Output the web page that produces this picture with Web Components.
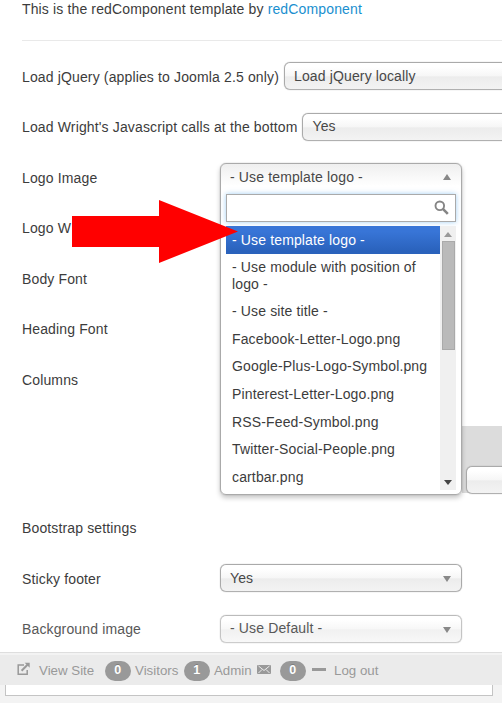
<!DOCTYPE html>
<html lang="en"><head><meta charset="utf-8"><title>Template settings</title>
<style>
html,body{margin:0;height:703px;overflow:hidden}
body{font:14px/17px "Liberation Sans",Arial,sans-serif;letter-spacing:.14px;color:#3c3c3c;background:#fff}
</style></head><body>
<settings-page></settings-page>
<script>
const define=(name,html,init)=>customElements.define(name,class extends HTMLElement{
  constructor(){super();this.attachShadow({mode:'open'}).innerHTML=html;}
  connectedCallback(){if(init)init(this,this.shadowRoot);}
});

define('select-box',`<style>
:host{display:block;box-sizing:border-box;width:242px;height:28px;flex:none;border:1px solid #aaa;border-bottom-color:#b0b0b0;border-radius:6px;box-shadow:0 0 1px rgba(0,0,0,.35);background:linear-gradient(#fff 15%,#f6f6f6 50%,#ececec 53%,#f3f3f3 100%);color:#484848}
:host([wide]){width:400px}
:host([faded]){border-color:#bbb #c4c4c4 #ccc;background:linear-gradient(#fff 15%,#f7f7f7 50%,#f1f1f1 53%,#f8f8f8);color:#585858}
div{display:flex;align-items:center;height:26px;padding:0 10px 0 9px}
i{width:0;height:0;border:4px solid transparent;border-top:6px solid #888;border-bottom:0;margin:2px 0 0 auto}
</style><div><slot></slot><i></i></div>`);

define('form-row',`<style>
:host{display:flex;height:50.5px;align-items:center;white-space:nowrap}
span{width:198px;flex:none;padding-top:2px}
:host([inline]) span{width:auto;margin-right:5px}
</style><span></span><slot></slot>`,(el,r)=>{r.querySelector('span').textContent=el.getAttribute('label');});

define('option-item',`<style>
:host{display:block;padding:5.5px 6px 5.55px;line-height:16.5px;color:#3c3c3c}
:host([selected]){background:linear-gradient(#3875d7 20%,#2a62bc 90%);color:#fff}
</style><slot></slot>`);

define('search-field',`<style>
:host{display:flex;box-sizing:border-box;height:28px;border:1px solid #aaa;background:#fff;box-shadow:0 0 5px rgba(82,168,236,.55);justify-content:flex-end;padding:5px 6px 0 0}
</style><svg width="15" height="15" viewBox="0 0 15 15" fill="none" stroke="#858585"><circle cx="5.8" cy="5.8" r="4.3" stroke-width="1.9"/><path d="M8.9 8.9L13.8 13.8" stroke-width="2.6"/></svg>`);

define('scroll-track',`<style>
:host{display:flex;flex-direction:column;align-items:center;width:16px;flex:none;background:#f0f0f0}
.up,.down{width:0;height:0;border:4px solid transparent}
.up{border-bottom:5px solid #999;border-top:0;margin:6px 0 4px}
.thumb{width:11px;height:107px;background:#bababa;border:1px solid #aaa;box-sizing:content-box}
.down{border-top:5px solid #444;border-bottom:0;margin:auto 0 5px}
</style><i class="up"></i><i class="thumb"></i><i class="down"></i>`);

define('open-select',`<style>
:host{display:block;position:relative;width:242px;height:28px;flex:none}
.box{position:absolute;z-index:2;top:0;left:0;box-sizing:border-box;width:242px;height:332px;border:1px solid #aaa;border-radius:6px;box-shadow:0 3px 5px rgba(0,0,0,.22),0 0 1px rgba(0,0,0,.35);background:linear-gradient(#efefef,#fff 22px);padding:0 5px 4px;display:flex;flex-direction:column;color:#3c3c3c}
header{display:flex;height:26px;align-items:center;justify-content:space-between;padding:0 5px 0 4px;color:#484848}
header i{width:0;height:0;border:4px solid transparent;border-bottom:6px solid #888;border-top:0}
search-field{margin:4px 0 4px 0}
.list{display:flex;height:264px}
.options{flex:1;white-space:normal}
</style><div class="box"><header><slot name="value"></slot><i></i></header><search-field></search-field>
<div class="list"><div class="options"><slot></slot></div><scroll-track></scroll-track></div></div>`);

define('red-arrow',`<style>:host{display:block;position:absolute;left:72px;top:200px;z-index:3;line-height:0}</style>
<svg width="166" height="63" viewBox="0 0 166 63"><path d="M0 16H87V0L166 31.5L87 63V47H0Z" fill="#f00"/></svg>`);

define('count-badge',`<style>:host{display:flex;align-items:center;justify-content:center;width:26.5px;height:20px;border-radius:10px;background:#999;color:#fff;font-weight:bold;font-size:12.5px;flex:none;text-shadow:0 -1px 0 rgba(0,0,0,.2)}</style><slot></slot>`);

define('status-bar',`<style>
:host{position:absolute;z-index:4;left:0;right:0;top:652px;height:33px;box-sizing:border-box;border-top:1px solid #dedede;background:#ebebeb;box-shadow:inset 0 2px 0 #f3f3f3;color:#999;display:flex;align-items:center;padding:3px 0 0 17px;font-size:13.3px;letter-spacing:0;white-space:nowrap}
svg{flex:none}
.view{margin:0 8.5px 0 8px;width:57px}
.vis{margin-left:4px;width:45px;margin-right:3.5px}
.adm{margin-left:4px;width:43px}
.dash{width:14px;height:3px;background:#999;margin:-3px 8.5px 0 5.5px}
</style>
<svg width="14" height="14" viewBox="0 0 14 14" fill="none" stroke="#999" stroke-width="1.5" style="margin-top:-3px"><path d="M7 3H1.2V12.2H10.2V8"/><path d="M4.6 8.7L10.5 2.8" stroke-width="2"/><path d="M7.7 .8H12.7V5.8L7.7 .8Z" fill="#999" stroke="none"/></svg>
<span class="view">View Site</span><count-badge>0</count-badge><span class="vis">Visitors</span><count-badge>1</count-badge><span class="adm">Admin</span>
<svg width="14" height="9" viewBox="0 0 14 9" style="margin:-2px 8.5px 0 0"><rect width="14" height="9" rx="1" fill="#999"/><path d="M1.5 1L7 5.5L12.5 1M1.5 8L5 4.5M12.5 8L9 4.5" fill="none" stroke="#ebebeb"/></svg>
<count-badge>0</count-badge><i class="dash"></i><span>Log out</span>`);

define('column-panel',`<style>
:host{display:block;height:122.2px;box-sizing:border-box;padding:21.5px 0 0 440px}
div{height:67px;width:200px;background:#dcdcdc;box-sizing:border-box;padding:40px 0 0 4px}
</style><div><select-box wide></select-box></div>`);

define('settings-page',`<style>
:host{display:block;position:relative;width:502px;height:703px;overflow:hidden;background:#f3f3f3}
main{height:685px;background:#fff;box-sizing:border-box;padding-left:22px;overflow:hidden}
.intro{height:41px;box-sizing:border-box;border-bottom:1px solid #e9e9e9;padding-top:1px;margin-bottom:10px}
a{color:#1a8fcf;text-decoration:none}
.end{margin-left:5px;width:488px;height:11px;box-sizing:border-box;background:#fff;border:1px solid #c4c4c4;border-top:0}
form-row[faded]{color:#585858}
</style><main>
<div class="intro">This is the redComponent template by <a>redComponent</a></div>
<form-row inline label="Load jQuery (applies to Joomla 2.5 only)"><select-box wide>Load jQuery locally</select-box></form-row>
<form-row inline label="Load Wright's Javascript calls at the bottom"><select-box wide>Yes</select-box></form-row>
<form-row label="Logo Image"><open-select><span slot="value">- Use template logo -</span>
<option-item selected>- Use template logo -</option-item><option-item>- Use module with position of logo -</option-item><option-item>- Use site title -</option-item><option-item>Facebook-Letter-Logo.png</option-item><option-item>Google-Plus-Logo-Symbol.png</option-item><option-item>Pinterest-Letter-Logo.png</option-item><option-item>RSS-Feed-Symbol.png</option-item><option-item>Twitter-Social-People.png</option-item><option-item>cartbar.png</option-item></open-select></form-row>
<form-row label="Logo W"></form-row>
<form-row label="Body Font"></form-row>
<form-row label="Heading Font"></form-row>
<form-row label="Columns"></form-row>
<column-panel></column-panel>
<div style="margin-top:-24px"><form-row label="Bootstrap settings"></form-row>
<form-row label="Sticky footer"><select-box>Yes</select-box></form-row>
<form-row faded label="Background image"><select-box faded>- Use Default -</select-box></form-row></div>
</main><div class="end"></div><red-arrow></red-arrow><status-bar></status-bar>`);
</script></body></html>
